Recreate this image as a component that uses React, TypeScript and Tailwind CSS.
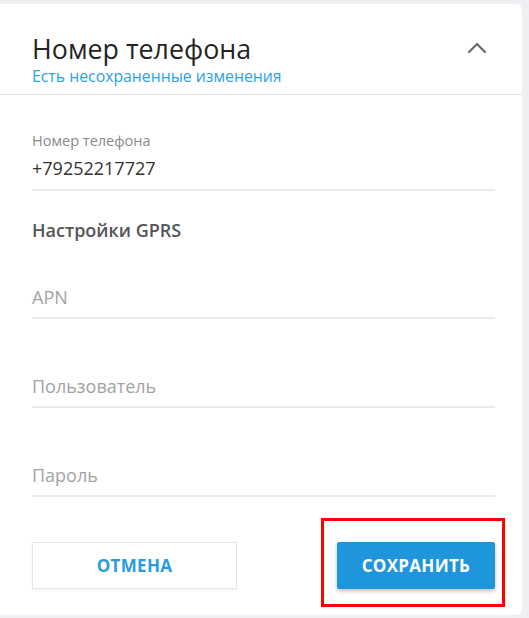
import { ChevronUp } from "lucide-react";

function Field({ placeholder }: { placeholder: string }) {
  return (
    <div className="flex h-[89px] flex-col justify-end">
      <div className="border-b-2 border-[#ececec] pb-[7px] text-[18px] leading-[26px] text-[#a3a3a3]">
        {placeholder}
      </div>
    </div>
  );
}

export default function App() {
  return (
    <div
      className="relative h-[618px] w-[529px] bg-[#eef0f3] pt-[4px]"
      style={{ fontFamily: '"Open Sans", "Noto Sans", sans-serif' }}
    >
      <div className="flex h-[611px] w-[522px] flex-col rounded-r-md bg-white">
        <header className="flex items-start justify-between border-b border-[#e4e4e4] pl-[32px] pr-[29px] pt-[28px] pb-[8px]">
          <div>
            <h1 className="text-[26.8px] leading-[34px] text-[#242424]">Номер телефона</h1>
            <p className="text-[15.8px] leading-[20px] text-[#2ea1e8]">Есть несохраненные изменения</p>
          </div>
          <ChevronUp className="h-[32px] w-[32px] text-[#6b6b6b]" strokeWidth={1.7} />
        </header>

        <div className="flex flex-col pl-[32px] pr-[27px] pt-[36px]">
          <div className="border-b-2 border-[#ececec] pb-[8px]">
            <div className="text-[14.5px] leading-[20px] text-[#8a8a8a]">Номер телефона</div>
            <div className="mt-[4px] text-[18px] leading-[26px] text-[#333]">+79252217727</div>
          </div>

          <div className="mt-[26px] text-[18px] font-semibold leading-[26px] text-[#555]">
            Настройки GPRS
          </div>

          <div className="-mt-[13px] flex flex-col">
            <Field placeholder="APN" />
            <Field placeholder="Пользователь" />
            <Field placeholder="Пароль" />
          </div>

          <div className="mt-[45px] flex items-center justify-between">
            <button className="h-[47px] w-[205px] border border-[#e6e6e6] bg-white text-[17px] font-bold tracking-[0.3px] text-[#2a9be0] shadow-[0_1px_2px_rgba(0,0,0,0.06)]">
              ОТМЕНА
            </button>
            <button className="h-[47px] w-[158px] rounded-[2px] bg-[#1f95dc] text-[17px] font-bold tracking-[0.3px] text-white shadow-[0_2px_4px_rgba(0,0,0,0.25)]">
              СОХРАНИТЬ
            </button>
          </div>
        </div>
      </div>

      <div className="pointer-events-none absolute left-[321px] top-[518px] h-[89px] w-[184px] border-[3px] border-[#ff0000]" />
    </div>
  );
}
